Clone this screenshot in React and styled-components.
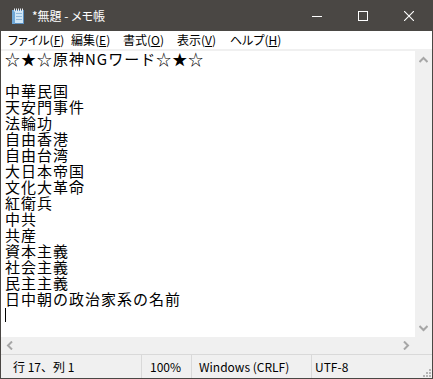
import React from "react";
import styled, { createGlobalStyle } from "styled-components";

const GlobalStyle = createGlobalStyle`
    html, body {
        margin: 0;
        padding: 0;
        background: #ffffff;
    }
`;

const UI_FONT = `"Noto Sans CJK JP", "Noto Sans", sans-serif`;

const Window = styled.div`
    width: 433px;
    height: 379px;
    box-sizing: border-box;
    border: 1px solid #4a4744;
    display: flex;
    flex-direction: column;
    background: #ffffff;
    font-family: ${UI_FONT};
`;

const TitleBar = styled.div`
    height: 30px;
    flex: none;
    background: #4a4744;
    display: flex;
    align-items: center;
    color: #ffffff;
`;

const TitleIcon = styled.div`
    width: 16px;
    height: 16px;
    margin: 0 6px 0 9px;
    display: flex;
`;

const TitleText = styled.div`
    flex: 1;
    font-size: 12px;
    line-height: 16px;
    padding-bottom: 1px;
    font-feature-settings: "palt";
`;

const CaptionButton = styled.div`
    width: 46px;
    height: 30px;
    display: flex;
    align-items: center;
    justify-content: center;
`;

const MenuBar = styled.div`
    height: 18px;
    flex: none;
    display: flex;
    align-items: center;
    border-bottom: 2px solid #f0f0f0;
`;

const MenuItem = styled.div`
    box-sizing: border-box;
    font-size: 12px;
    line-height: 18px;
    color: #000000;
    padding: 0 7px;
    width: ${(props) => props.w}px;
    white-space: nowrap;
    font-feature-settings: "palt";

    u {
        text-underline-offset: 1px;
    }
`;

const EditorArea = styled.div`
    flex: 1;
    display: grid;
    grid-template-columns: 1fr 17px;
    grid-template-rows: 1fr 17px;
    min-height: 0;
`;

const TextPane = styled.div`
    background: #ffffff;
    padding-left: 4px;
    font-family: "Noto Sans CJK JP", monospace;
    font-size: 15px;
    letter-spacing: 1px;
    line-height: 16px;
    color: #000000;
    white-space: pre;
    overflow: hidden;
`;

const Line = styled.div`
    height: 16px;
`;

const Caret = styled.span`
    display: inline-block;
    width: 1px;
    height: 14px;
    margin-top: 1px;
    background: #000000;
    vertical-align: top;
`;

const VScroll = styled.div`
    background: #f0f0f0;
    display: flex;
    flex-direction: column;
    justify-content: space-between;
    align-items: center;
`;

const HScroll = styled.div`
    background: #f0f0f0;
    display: flex;
    justify-content: space-between;
    align-items: center;
`;

const ArrowBox = styled.div`
    width: 17px;
    height: 17px;
    display: flex;
    align-items: center;
    justify-content: center;
`;

const Corner = styled.div`
    background: #f0f0f0;
`;

const StatusBar = styled.div`
    height: 23px;
    flex: none;
    border-top: 1px solid #d9d9d9;
    background: #f0f0f0;
    display: flex;
    align-items: center;
    position: relative;
`;

const StatusCell = styled.div`
    width: ${(props) => props.w}px;
    box-sizing: border-box;
    height: 23px;
    padding-left: ${(props) => props.pad}px;
    border-left: ${(props) => (props.first ? "none" : "1px solid #d9d9d9")};
    font-size: 12px;
    line-height: 23px;
    color: #000000;
    white-space: nowrap;
`;

const Grip = styled.div`
    position: absolute;
    right: 1px;
    bottom: 1px;
    width: 8px;
    height: 8px;
    display: flex;
`;

const NotepadIcon = () => (
    <svg width="16" height="16" viewBox="0 0 16 16">
        <rect x="2.5" y="2.5" width="11" height="13" fill="#cfe6f7" stroke="#5b8fc0" />
        <rect x="2" y="2" width="3" height="14" fill="#6fa8d8" />
        <rect x="6" y="5" width="6" height="1" fill="#8fb8dc" />
        <rect x="6" y="8" width="6" height="1" fill="#8fb8dc" />
        <rect x="6" y="11" width="6" height="1" fill="#8fb8dc" />
        {[4, 6, 8, 10, 12].map((x) => (
            <rect key={x} x={x} y="0.5" width="1" height="3" fill="#e8eef4" />
        ))}
    </svg>
);

const Chevron = ({ dir }) => {
    const rot = { up: 0, down: 180, left: -90, right: 90 }[dir];
    return (
        <svg width="9" height="9" viewBox="0 0 9 9">
            <g transform={`rotate(${rot} 4.5 4.5)`}>
                <path d="M0.5 7 L4.5 3 L8.5 7" fill="none" stroke="#a6a6a6" strokeWidth="2" />
            </g>
        </svg>
    );
};

const lines = [
    "☆★☆原神NGワード☆★☆",
    "",
    "中華民国",
    "天安門事件",
    "法輪功",
    "自由香港",
    "自由台湾",
    "大日本帝国",
    "文化大革命",
    "紅衛兵",
    "中共",
    "共産",
    "資本主義",
    "社会主義",
    "民主主義",
    "日中朝の政治家系の名前",
];

const menus = [
    { label: "ファイル", key: "F", w: 63 },
    { label: "編集", key: "E", w: 52 },
    { label: "書式", key: "O", w: 54 },
    { label: "表示", key: "V", w: 53 },
    { label: "ヘルプ", key: "H", w: 70 },
];

export default function App() {
    return (
        <>
            <GlobalStyle />
            <Window>
                <TitleBar>
                    <TitleIcon>
                        <NotepadIcon />
                    </TitleIcon>
                    <TitleText>*無題 - メモ帳</TitleText>
                    <CaptionButton>
                        <svg width="10" height="10" viewBox="0 0 10 10">
                            <rect x="0" y="5" width="10" height="1" fill="#ffffff" />
                        </svg>
                    </CaptionButton>
                    <CaptionButton>
                        <svg width="10" height="10" viewBox="0 0 10 10">
                            <rect x="0.5" y="0.5" width="9" height="9" fill="none" stroke="#ffffff" />
                        </svg>
                    </CaptionButton>
                    <CaptionButton>
                        <svg width="10" height="10" viewBox="0 0 10 10">
                            <path d="M0 0 L10 10 M10 0 L0 10" stroke="#ffffff" strokeWidth="1.1" />
                        </svg>
                    </CaptionButton>
                </TitleBar>
                <MenuBar>
                    {menus.map((m) => (
                        <MenuItem key={m.key} w={m.w}>
                            {m.label}(<u>{m.key}</u>)
                        </MenuItem>
                    ))}
                </MenuBar>
                <EditorArea>
                    <TextPane>
                        {lines.map((l, i) => (
                            <Line key={i}>{l}</Line>
                        ))}
                        <Line>
                            <Caret />
                        </Line>
                    </TextPane>
                    <VScroll>
                        <ArrowBox>
                            <Chevron dir="up" />
                        </ArrowBox>
                        <ArrowBox>
                            <Chevron dir="down" />
                        </ArrowBox>
                    </VScroll>
                    <HScroll>
                        <ArrowBox>
                            <Chevron dir="left" />
                        </ArrowBox>
                        <ArrowBox>
                            <Chevron dir="right" />
                        </ArrowBox>
                    </HScroll>
                    <Corner />
                </EditorArea>
                <StatusBar>
                    <StatusCell first w={140} pad={12}>
                        行 17、列 1
                    </StatusCell>
                    <StatusCell w={50} pad={8}>
                        100%
                    </StatusCell>
                    <StatusCell w={120} pad={7}>
                        Windows (CRLF)
                    </StatusCell>
                    <StatusCell w={100} pad={3}>
                        UTF-8
                    </StatusCell>
                    <Grip>
                        <svg width="8" height="8" viewBox="0 0 8 8">
                            {[
                                [6, 0],
                                [6, 3],
                                [3, 3],
                                [6, 6],
                                [3, 6],
                                [0, 6],
                            ].map(([x, y]) => (
                                <rect key={`${x}-${y}`} x={x} y={y} width="2" height="2" fill="#b5b5b5" />
                            ))}
                        </svg>
                    </Grip>
                </StatusBar>
            </Window>
        </>
    );
}
